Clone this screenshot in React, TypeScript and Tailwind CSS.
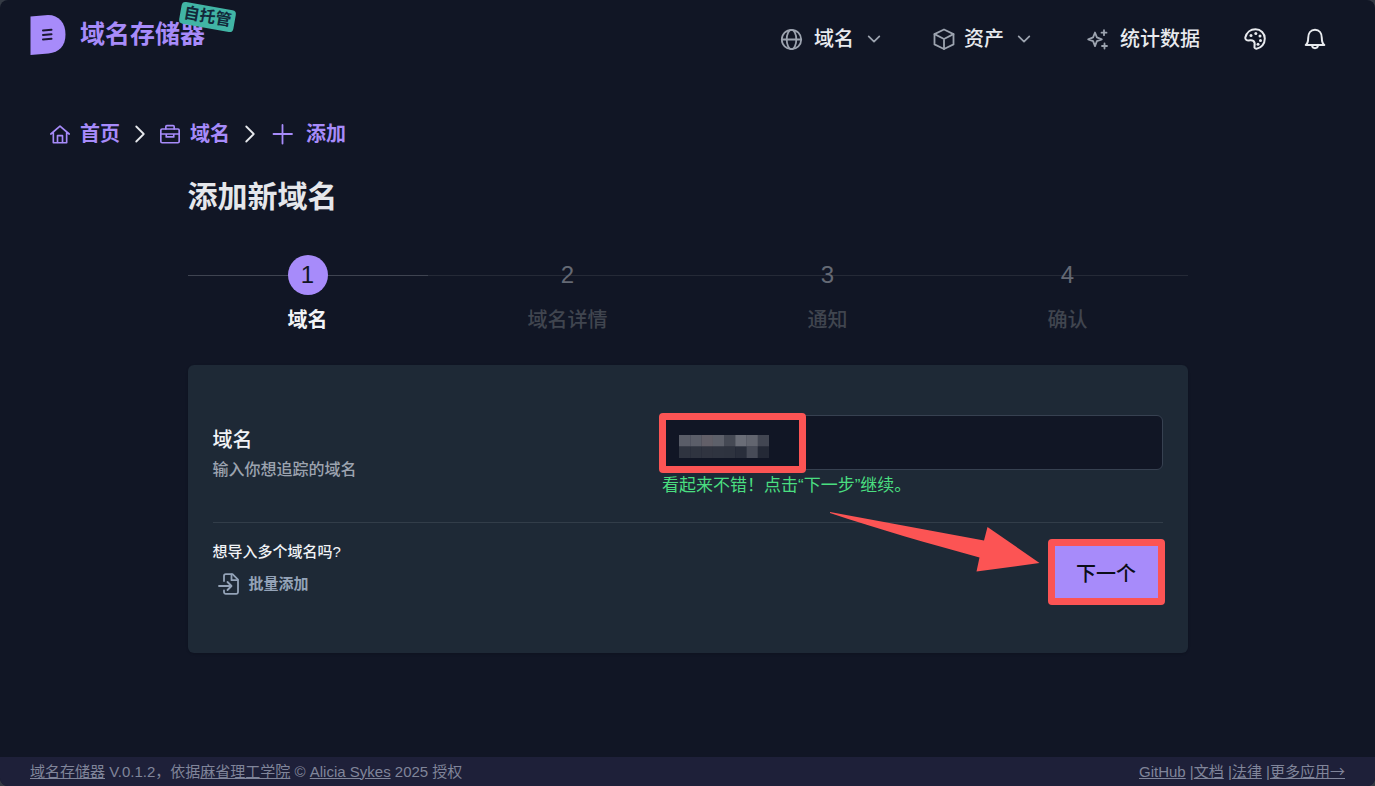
import React, { ReactNode } from "react";

type IconProps = { className?: string; children?: ReactNode };

function Icon({ className = "size-6", children }: IconProps) {
  return (
    <svg
      viewBox="0 0 24 24"
      className={className}
      fill="none"
      stroke="currentColor"
      strokeWidth="1.8"
      strokeLinecap="round"
      strokeLinejoin="round"
      aria-hidden="true"
    >
      {children}
    </svg>
  );
}

const GlobeIcon = () => (
  <Icon className="size-6 text-[#9ca3af]">
    <circle cx="11.500" cy="12.500" r="9.700" />
    <ellipse cx="11.500" cy="12.500" rx="4.800" ry="9.700" />
    <path d="M2 12.500h19" />
  </Icon>
);

const CubeIcon = () => (
  <Icon className="size-6 text-[#9ca3af]">
    <path d="M12 2.500l9.500 4.600v10.300L12 22l-9.500-4.600V7.100z" />
    <path d="M2.500 7.100L12 12l9.500-4.900M12 12v10" />
  </Icon>
);

const SparkleIcon = () => (
  <Icon className="size-6 text-[#9ca3af]">
    <path d="M9 5.500l1.900 4.900 4.900 1.900-4.900 1.900L9 19.100l-1.900-4.900-4.900-1.900 4.900-1.900z" />
    <path d="M18 3.200v5M15.500 5.700h5M18.500 16.500v5M16 19h5" strokeWidth="1.800" />
  </Icon>
);

const PaletteIcon = () => (
  <Icon className="size-6">
    <path
      strokeWidth="2"
      d="M2.300 10.500C3.500 5.500 7.500 2.300 12.500 2.300c5.300 0 9.300 4 9.300 9.200 0 5.500-3.500 9.700-8.300 10.200-1.700.1-2.300-1-2-2.600.5-2.600.3-4.300-1.200-5.300-1.200-.8-2.500-.5-4.300-.4-2.400.1-4-1-3.700-2.900z"
    />
    <g fill="currentColor" stroke="none">
      <circle cx="8" cy="8.500" r="1.500" />
      <circle cx="12.800" cy="6.500" r="1.500" />
      <circle cx="17" cy="9" r="1.500" />
      <circle cx="17.500" cy="13.500" r="1.500" />
      <circle cx="15" cy="17.300" r="1.500" />
    </g>
  </Icon>
);

const BellIcon = () => (
  <Icon className="size-6">
    <path strokeWidth="2" d="M2.700 18h18.600c-1.900-1.500-2.500-3.500-2.500-7 0-4.800-2.500-8.200-6.800-8.200S5.200 6.200 5.200 11c0 3.500-.6 5.500-2.500 7z" />
    <path strokeWidth="2" d="M9 18.500c.2 1.700 1.300 2.700 3 2.700s2.800-1 3-2.700" />
  </Icon>
);

const ChevronDown = () => (
  <Icon className="size-4 text-[#9ca3af]">
    <path d="M4 8l8 8 8-8" strokeWidth="2.600" />
  </Icon>
);

const ChevronRight = () => (
  <Icon className="size-5 text-[#e5e7eb]">
    <path d="M7.500 3l9 9-9 9" strokeWidth="2.200" />
  </Icon>
);

const HomeIcon = () => (
  <Icon className="size-5">
    <path strokeWidth="2" d="M1 12L12 2.500 23 12M4 9.500V22.500h16V9.500" />
    <path strokeWidth="2" d="M9 22v-8h6v8" />
  </Icon>
);

const BriefcaseIcon = () => (
  <Icon className="size-5">
    <rect x="1" y="6" width="22" height="16.500" rx="1.500" strokeWidth="2" />
    <path strokeWidth="2" d="M7 6V3.200A1.200 1.200 0 0 1 8.200 2h7.600A1.200 1.200 0 0 1 17 3.200V6M1 12h22M7.500 12v3.500h9V12" />
  </Icon>
);

const PlusIcon = () => (
  <Icon className="size-6">
    <path d="M12.500 3v18.500M3.500 12h18.500" />
  </Icon>
);

const ImportIcon = () => (
  <Icon className="size-6">
    <path d="M7 9V4a1.800 1.800 0 0 1 1.800-1.800h6.700L21 7.700V20a1.800 1.800 0 0 1-1.800 1.800H8.800A1.800 1.800 0 0 1 7 20v-1.500" />
    <path d="M14.500 2.500v5.700h6M2 14h12M10.500 10l4 4-4 4" />
  </Icon>
);

function Logo() {
  return (
    <svg viewBox="0 0 36 40" className="h-10 w-9" aria-hidden="true">
      <path d="M.5 1.500L18 0C29 0 35.500 8 35.500 19.500S29 37.500 18.500 38.500L.5 40z" fill="#a78bfa" />
      <path d="M13 15.500l8.500-.7M13 20l8.500-.7M13 24.500l8.500-.7" stroke="#1b1730" strokeWidth="2" strokeLinecap="round" />
    </svg>
  );
}

function Header() {
  return (
    <header className="flex h-[78px] items-center justify-between pr-[48px] pl-[30px]">
      <a href="#home" className="relative flex items-center gap-[14px] pb-[9px]">
        <Logo />
        <span className="pb-[2px] text-[25px] leading-9 font-bold text-[#a78bfa]">域名存储器</span>
        <span className="absolute -top-[9px] left-[150px] flex h-[22px] w-[55px] rotate-[10deg] items-center justify-center rounded bg-[#41b5a5] text-base leading-none font-bold whitespace-nowrap text-[#12293a]">
          自托管
        </span>
      </a>
      <nav className="flex items-center text-xl font-medium text-[#e8eaee]">
        <button type="button" className="flex items-center">
          <GlobeIcon />
          <span className="ml-[10px]">域名</span>
          <span className="ml-3"><ChevronDown /></span>
        </button>
        <button type="button" className="ml-[50px] flex items-center">
          <CubeIcon />
          <span className="ml-2">资产</span>
          <span className="ml-3"><ChevronDown /></span>
        </button>
        <a href="#stats" className="ml-[54px] flex items-center">
          <SparkleIcon />
          <span className="ml-[10px]">统计数据</span>
        </a>
        <button type="button" aria-label="主题" className="ml-[43px]"><PaletteIcon /></button>
        <button type="button" aria-label="消息" className="ml-9"><BellIcon /></button>
      </nav>
    </header>
  );
}

function Breadcrumb() {
  return (
    <nav className="flex h-7 items-center gap-[10px] px-[50px] text-xl font-bold text-[#a78bfa]">
      <a href="#home" className="flex items-center gap-[10px]"><HomeIcon />首页</a>
      <ChevronRight />
      <a href="#domains" className="flex items-center gap-[10px]"><BriefcaseIcon />域名</a>
      <ChevronRight />
      <a href="#add" className="flex items-center gap-3"><PlusIcon />添加</a>
    </nav>
  );
}

const steps = ["域名", "域名详情", "通知", "确认"];

function Stepper() {
  return (
    <ol className="mt-[37px] flex">
      {steps.map((label, i) => {
        const active = i === 0;
        return (
          <li key={label} className="relative flex flex-auto flex-col items-center">
            <span
              className={
                active
                  ? "absolute top-5 left-0 h-px w-full bg-[#3f4451]"
                  : "absolute top-5 left-0 h-px w-full bg-[#252a37]"
              }
            />
            <span
              className={
                active
                  ? "relative flex size-10 items-center justify-center rounded-full bg-[#a78bfa] text-2xl text-[#111625]"
                  : "relative flex size-10 items-center justify-center text-2xl text-[#646974]"
              }
            >
              {i + 1}
            </span>
            <span
              className={
                active
                  ? "mt-[10px] text-xl leading-[30px] font-bold text-[#f1f3f6]"
                  : "mt-[10px] text-xl leading-[30px] font-medium text-[#40454f]"
              }
            >
              {label}
            </span>
          </li>
        );
      })}
    </ol>
  );
}

const mosaic = [
  ["#5a5d68", "#5b5e69", "#625f68", "#5d606a", "#454954", "#6a6d77", "#62656f", "#424652"],
  ["#2f3440", "#2f3440", "#303440", "#2f3440", "#2e333f", "#292e3b", "#474b57", "#242936"],
];

function RedactedValue() {
  return (
    <svg viewBox="0 0 8 2" preserveAspectRatio="none" className="pointer-events-none absolute top-5 left-[19px] h-[23px] w-[90px]" aria-hidden="true">
      {mosaic.map((row, y) =>
        row.map((fill, x) => <rect key={`${x}-${y}`} x={x} y={y} width="1.020" height="1.020" fill={fill} />)
      )}
    </svg>
  );
}

function DomainCard() {
  return (
    <form
      className="relative mt-[30px] rounded-md bg-[#1e2936] px-[25px] pt-[50px] pb-[55px] shadow"
      onSubmit={(e) => e.preventDefault()}
    >
      <div className="grid grid-cols-[47fr_53fr] pb-6">
        <div className="pt-[10px]">
          <label htmlFor="domain" className="block text-xl leading-[30px] font-medium text-[#f1f3f6]">域名</label>
          <p className="mt-[3px] text-base leading-6 font-medium text-[#9ca3af]">输入你想追踪的域名</p>
        </div>
        <div className="pl-px">
          <div className="relative">
            <input
              id="domain"
              type="text"
              className="block h-[55px] w-full rounded-md border border-[#374151] bg-[#111625] px-5 text-xl text-white outline-none"
            />
            <RedactedValue />
            <span className="pointer-events-none absolute -top-[2px] -left-[1px] h-[60px] w-[147px] rounded border-[7px] border-[#fc5454]" />
          </div>
          <p className="mt-1 pl-[2px] text-[17px] leading-6 text-[#4ade80]">看起来不错！点击“下一步”继续。</p>
        </div>
      </div>
      <hr className="border-[#323d49]" />
      <div className="flex items-start justify-between pt-[17px]">
        <div>
          <p className="text-[15px] leading-6 font-medium text-[#f1f3f6]">想导入多个域名吗?</p>
          <a href="#bulk" className="mt-2 ml-1 flex items-center gap-2 text-[15px] leading-6 font-bold text-[#94a3b8]">
            <ImportIcon />批量添加
          </a>
        </div>
        <div className="relative mt-[6px] mr-[5px]">
          <button type="submit" className="block h-[52px] w-[103px] bg-[#a78bfa] pt-1 text-xl font-medium text-[#0b0d18]">
            下一个
          </button>
          <span className="pointer-events-none absolute -inset-[7px] rounded border-[7px] border-[#fc5454]" />
        </div>
      </div>
      <svg viewBox="0 0 210 60" className="pointer-events-none absolute top-[147px] right-[148px] h-[60px] w-[210px]" aria-hidden="true">
        <path d="M0 0L154 28.500L157.500 15L209.500 51L146.500 59.500L149.500 45.500C100 32 48 17 0 1z" fill="#fc5454" />
      </svg>
    </form>
  );
}

function Footer() {
  return (
    <footer className="mt-auto flex h-[29px] items-center justify-between bg-[#1e2039] px-[30px] text-[15px] leading-5 text-[#80859a]">
      <p>
        <a href="#home" className="underline">域名存储器</a> V.0.1.2，依据<a href="#license" className="underline">麻省理工学院</a> ©{" "}
        <a href="#author" className="underline">Alicia Sykes</a> 2025 授权
      </p>
      <p>
        <a href="#github" className="underline">GitHub</a> |<a href="#docs" className="underline">文档</a> |
        <a href="#legal" className="underline">法律</a> |<a href="#apps" className="underline">更多应用<span className="font-['Noto_Sans_CJK_SC',sans-serif]">→</span></a>
      </p>
    </footer>
  );
}

export default function App() {
  return (
    <div lang="zh-CN" className="bg-[#343a44] font-['Liberation_Sans','Noto_Sans_CJK_SC',sans-serif]">
      <div className="flex min-h-screen flex-col overflow-hidden rounded-lg bg-[#111625]">
        <Header />
        <main className="pt-[42px] pb-8">
          <Breadcrumb />
          <div className="mx-auto mt-7 max-w-[1000px]">
            <h1 className="text-3xl leading-[42px] font-bold text-[#e5e7eb]">添加新域名</h1>
            <Stepper />
            <DomainCard />
          </div>
        </main>
        <Footer />
      </div>
    </div>
  );
}
